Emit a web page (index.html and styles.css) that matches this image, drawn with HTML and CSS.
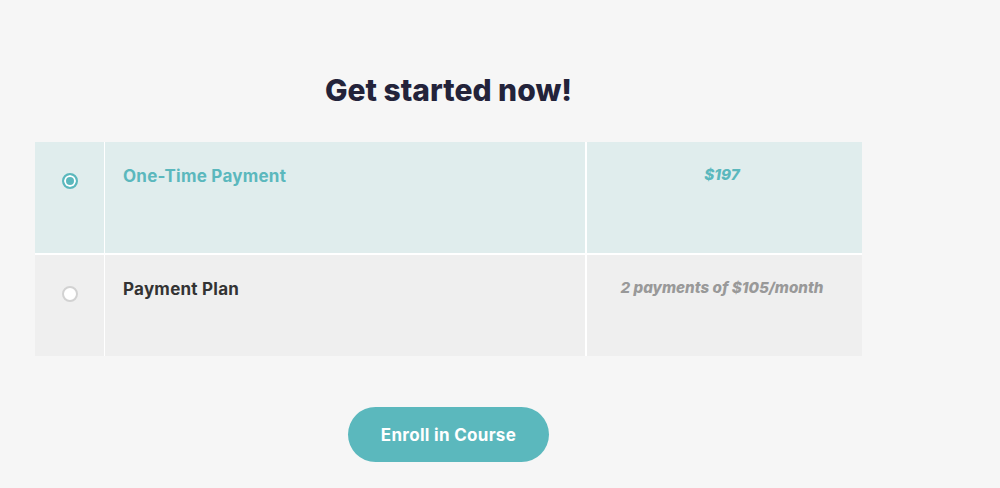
FILE: index.html
```html
<!DOCTYPE html>
<html>
<head>
<meta charset="utf-8">
<link rel="stylesheet" href="styles.css">
</head>
<body>
<main class="page">
  <h1 class="title">Get started now!</h1>
  <div class="plans">
    <div class="plan plan-selected">
      <div class="cell cell-radio"><span class="radio radio-on"></span></div>
      <div class="cell cell-name">One-Time Payment</div>
      <div class="cell cell-price">$197</div>
    </div>
    <div class="plan plan-other">
      <div class="cell cell-radio"><span class="radio"></span></div>
      <div class="cell cell-name">Payment Plan</div>
      <div class="cell cell-price">2 payments of $105/month</div>
    </div>
  </div>
  <div class="actions">
    <button class="enroll">Enroll in Course</button>
  </div>
</main>
</body>
</html>
```

FILE: styles.css
```css
html, body {
  margin: 0;
  padding: 0;
  background: #f6f6f6;
}
body {
  font-family: "Inter", "Lato", sans-serif;
}
.page {
  width: 827px;
  margin-left: 35px;
  padding-top: 72px;
}
.title {
  margin: 0;
  text-align: center;
  font-size: 30px;
  line-height: 36px;
  font-weight: 800;
  color: #23233a;
}
.plans {
  margin-top: 34px;
}
.plan {
  display: grid;
  grid-template-columns: 70px 482px 1fr;
}
.plan-selected {
  height: 111px;
  background: #e0eded;
  border-bottom: 2px solid #ffffff;
}
.plan-other {
  height: 101px;
  background: #efefef;
}
.cell {
  border-right: 2px solid #ffffff;
  padding-top: 22px;
  box-sizing: border-box;
}
.cell-price {
  border-right: none;
  padding-right: 5px;
  text-align: center;
  font-style: italic;
  font-weight: 800;
  font-size: 15.2px;
  line-height: 22px;
  padding-top: 22px;
}
.cell-radio {
  display: flex;
  justify-content: center;
  padding-top: 31px;
  padding-left: 1px;
  border-right-width: 1px;
}
.radio {
  width: 16px;
  height: 16px;
  border-radius: 50%;
  box-sizing: border-box;
  border: 2px solid #d2d2d2;
  background: #ffffff;
}
.radio-on {
  border: 2px solid #5bb8bd;
  background: #5bb8bd;
  box-shadow: inset 0 0 0 2px #ffffff;
}
.cell-name {
  padding-left: 18px;
  font-size: 17px;
  line-height: 24px;
  font-weight: 700;
  letter-spacing: 0.25px;
}
.plan-selected .cell-name,
.plan-selected .cell-price {
  color: #5bb8bd;
}
.plan-other .cell-name {
  color: #333333;
}
.plan-other .cell-price {
  color: #999999;
}
.actions {
  display: flex;
  justify-content: center;
  margin-top: 51px;
}
.enroll {
  width: 201px;
  height: 55px;
  border: none;
  border-radius: 28px;
  background: #5bb8bd;
  color: #ffffff;
  font-family: "Inter", "Lato", sans-serif;
  font-size: 17px;
  font-weight: 700;
  letter-spacing: 0.3px;
  cursor: pointer;
}
```
